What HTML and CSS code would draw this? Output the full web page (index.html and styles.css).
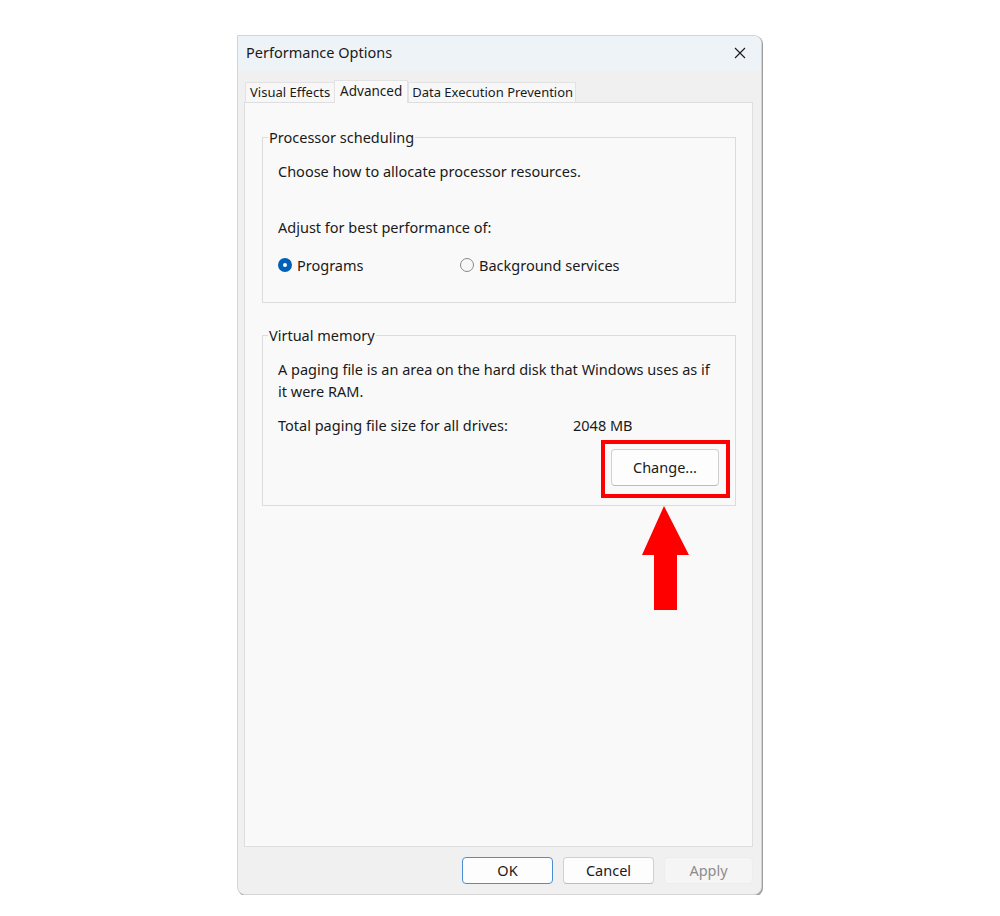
FILE: index.html
```html
<!DOCTYPE html>
<html>
<head>
<meta charset="utf-8">
<title>Performance Options</title>
<link rel="stylesheet" href="styles.css">
</head>
<body>
<div class="window">
  <div class="titlebar">
    <span class="title">Performance Options</span>
    <svg class="close" width="12" height="12" viewBox="0 0 12 12"><path d="M1 1 L11 11 M11 1 L1 11" stroke="#1a1a1a" stroke-width="1.1" fill="none"/></svg>
  </div>
  <div class="body">
    <div class="tabs">
      <div class="tab">Visual Effects</div>
      <div class="tab active">Advanced</div>
      <div class="tab dep">Data Execution Prevention</div>
    </div>
    <div class="panel">
      <div class="group group-proc">
        <div class="legend">Processor scheduling</div>
        <div class="line first">Choose how to allocate processor resources.</div>
        <div class="line adjust">Adjust for best performance of:</div>
        <div class="radios">
          <div class="radio-item r1"><span class="radio checked"></span><span>Programs</span></div>
          <div class="radio-item"><span class="radio"></span><span>Background services</span></div>
        </div>
      </div>
      <div class="group group-vm">
        <div class="legend">Virtual memory</div>
        <div class="para">A paging file is an area on the hard disk that Windows uses as if<br>it were RAM.</div>
        <div class="total"><span class="total-label">Total paging file size for all drives:</span><span>2048 MB</span></div>
        <div class="btn-row">
          <div class="highlight-wrap">
            <div class="btn change">Change...</div>
            <div class="highlight"></div>
          </div>
        </div>
      </div>
      <svg class="arrow" width="47" height="104" viewBox="0 0 47 104"><polygon points="22,0 47,49 35,49 35,104 12,104 12,49 0,49" fill="#ff0000"/></svg>
    </div>
    <div class="footer">
      <div class="btn ok">OK</div>
      <div class="btn">Cancel</div>
      <div class="btn disabled">Apply</div>
    </div>
  </div>
</div>
</body>
</html>
```

FILE: styles.css
```css
html, body {
  margin: 0;
  padding: 0;
  background: #ffffff;
}
body {
  font-family: "Noto Sans", "Open Sans", sans-serif;
  font-size: 14.5px;
  color: #1a1a1a;
}
.window {
  margin: 35px 0 0 237px;
  width: 525px;
  height: 860px;
  box-sizing: border-box;
  display: flex;
  flex-direction: column;
  border: 1px solid #d4d4d4;
  border-radius: 0 8px 8px 8px;
  box-shadow: 1px 1px 0 #9c9c9c;
  overflow: hidden;
  background: #f0f0f0;
}
.titlebar {
  height: 34px;
  background: #eef3f8;
  display: flex;
  align-items: center;
  justify-content: space-between;
  padding: 0 15px 0 8px;
  flex: none;
}
.title {
  font-size: 14.5px;
  line-height: 20px;
  margin-top: -2px;
}
.close {
  display: block;
}
.body {
  flex: 1;
  display: flex;
  flex-direction: column;
  padding: 0 8px 0 6px;
}
.tabs {
  height: 32px;
  display: flex;
  align-items: flex-end;
  padding-left: 1px;
  flex: none;
}
.tab {
  height: 19px;
  line-height: 19px;
  padding: 0 4px;
  background: #f7f7f7;
  border: 1px solid #e2e2e2;
  border-bottom: none;
  font-size: 13px;
}
.tab.active {
  height: 22px;
  line-height: 20px;
  background: #f9f9f9;
  margin-bottom: -1px;
  margin-left: -1px;
  position: relative;
  z-index: 1;
  padding: 0 5px;
  font-size: 13.5px;
}
.tab.dep {
  padding: 0 2px 0 3px;
}
.panel {
  position: relative;
  height: 745px;
  box-sizing: border-box;
  background: #f9f9f9;
  border: 1px solid #dedede;
  padding: 34px 16px 0 17px;
  flex: none;
}
.group {
  border: 1px solid #dcdcdc;
  padding: 0 15px;
  display: flex;
  flex-direction: column;
}
.legend {
  align-self: flex-start;
  margin: -11px 0 0 -10px;
  padding: 0 1px;
  line-height: 20px;
  background: #f9f9f9;
}
.line {
  line-height: 20px;
}
.line.first {
  margin-top: 14px;
}
.line.adjust {
  margin-top: 36px;
}
.radios {
  display: flex;
  margin-top: 18px;
  line-height: 20px;
  padding-bottom: 27px;
}
.radio-item {
  display: flex;
  align-items: center;
}
.radio-item.r1 {
  width: 182px;
}
.radio {
  width: 12px;
  height: 12px;
  border-radius: 50%;
  border: 1px solid #8a8a8a;
  background: #f7f7f7;
  margin-right: 5px;
  box-sizing: content-box;
}
.radio.checked {
  width: 4px;
  height: 4px;
  border: 5px solid #0060b8;
  background: #ffffff;
}
.group-vm {
  margin-top: 32px;
}
.para {
  margin-top: 13px;
  line-height: 22px;
}
.total {
  margin-top: 13px;
  line-height: 20px;
  display: flex;
}
.total-label {
  width: 295px;
}
.btn-row {
  display: flex;
  justify-content: flex-end;
  margin-top: 14px;
  padding-right: 1px;
  padding-bottom: 19px;
}
.highlight-wrap {
  position: relative;
}
.btn {
  box-sizing: border-box;
  width: 91px;
  height: 27px;
  line-height: 25px;
  text-align: center;
  background: #fdfdfd;
  border: 1px solid #d0d0d0;
  border-bottom-color: #bcbcbc;
  border-radius: 4px;
  font-size: 14.5px;
}
.btn.change {
  width: 108px;
  height: 37px;
  line-height: 35px;
}
.highlight {
  position: absolute;
  top: -9px;
  left: -10px;
  right: -11px;
  bottom: -12px;
  border: 4px solid #ff0000;
}
.arrow {
  position: absolute;
  left: 397px;
  top: 403px;
}
.footer {
  flex: 1;
  display: flex;
  justify-content: flex-end;
  align-items: flex-start;
  gap: 10px;
  padding-top: 10px;
}
.btn.ok {
  border: 1px solid #4a8fd4;
}
.btn.disabled {
  width: 89px;
  background: #f5f5f5;
  border-color: #ededed;
  color: #8c8c8c;
}
```
